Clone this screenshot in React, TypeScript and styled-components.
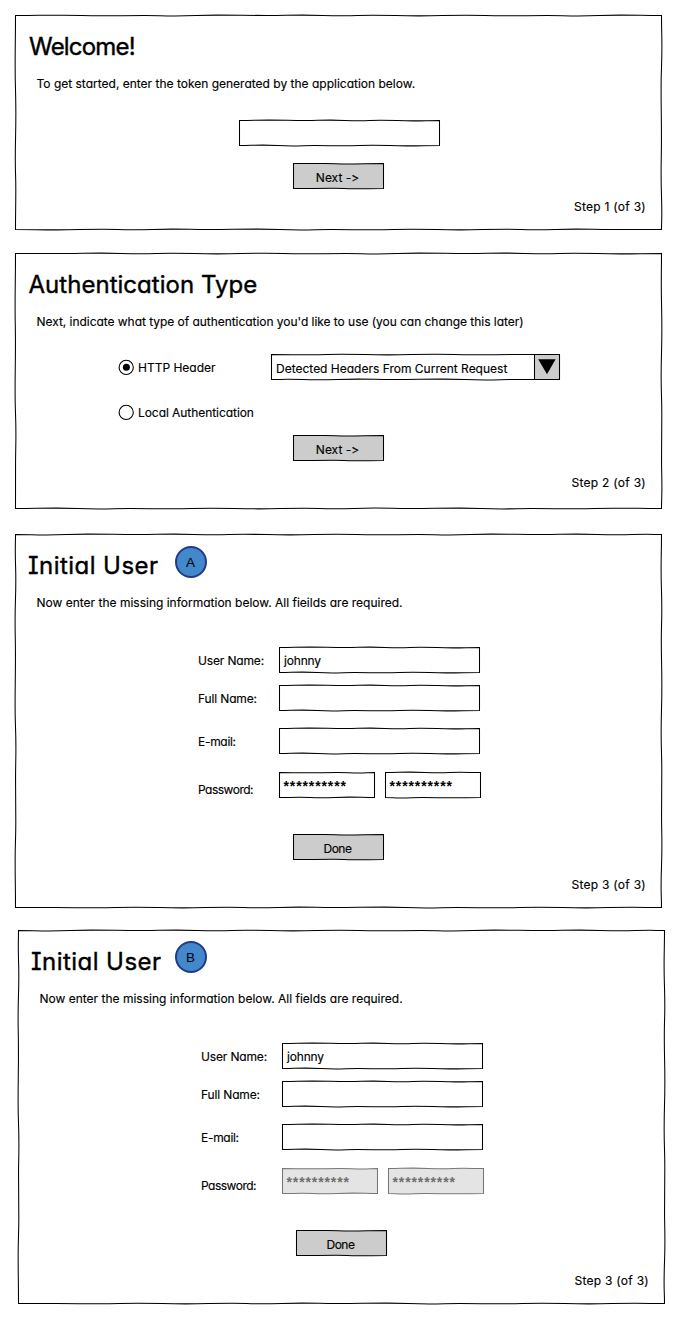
import React from 'react';
import styled, { createGlobalStyle, css } from 'styled-components';

const GlobalStyle = createGlobalStyle`
  body {
    margin: 0;
    background: #fff;
    color: #000;
    font-family: Inter, 'Noto Sans', sans-serif;
    font-size: 12px;
    line-height: 21px;
    font-feature-settings: 'cv11', 'cv08', 'calt' 0;
    -webkit-text-stroke: 0.15px currentColor;
  }
`;

/* ---------- hand-drawn outline ---------- */

const KNOTS = [34, 27, 31, 22, 30, 36, 25, 29, 21, 33];
const DRIFT = [-0.35, 0.3, 0.05, 0.4, -0.4, -0.05, -0.4, 0.3, -0.2, 0.35];

function edge(length: number, seed: number): [number, number][] {
  const points: [number, number][] = [];
  const stretch = length > 205 ? 1.4 : 1;
  let at = 0;
  for (let i = seed; ; i += 1) {
    at += KNOTS[i % KNOTS.length] * stretch;
    if (at > length - 14) break;
    points.push([at, DRIFT[i % DRIFT.length]]);
  }
  points.push([length, 0]);
  return points;
}

function outline(w: number, h: number, seed: number) {
  const x0 = 0.5;
  const y0 = 0.5;
  const x1 = w - 0.5;
  const y1 = h - 0.5;
  let d = `M${x0} ${y0}`;
  const run = (length: number, s: number, place: (t: number, o: number) => [number, number]) => {
    let previous: [number, number] = [0, 0];
    edge(length, s).forEach(point => {
      const middle = (previous[0] + point[0]) / 2;
      const a = place(middle, previous[1]);
      const b = place(middle, point[1]);
      const c = place(point[0], point[1]);
      d += `C${a.join(' ')} ${b.join(' ')} ${c.join(' ')}`;
      previous = point;
    });
  };
  run(x1 - x0, seed, (t, o) => [x0 + t, y0 + o]);
  run(y1 - y0, seed + 3, (t, o) => [x1 + o, y0 + t]);
  run(x1 - x0, seed + 5, (t, o) => [x1 - t, y1 + o]);
  run(y1 - y0, seed + 7, (t, o) => [x0 + o, y1 - t]);
  return `${d}Z`;
}

const OutlineSvg = styled.svg`
  position: absolute;
  inset: 0;
  z-index: -1;
  overflow: visible;
`;

interface SketchProps {
  w: number;
  h: number;
  seed?: number;
  fill?: string;
  stroke?: string;
}

function Sketch({ w, h, seed = 0, fill = '#fff', stroke = '#000' }: SketchProps) {
  return (
    <OutlineSvg width={w} height={h} aria-hidden="true">
      <path d={outline(w, h, seed)} fill={fill} stroke={stroke} strokeWidth={1.05} />
    </OutlineSvg>
  );
}

const sketched = css`
  position: relative;
  z-index: 0;
  box-sizing: border-box;
  flex: none;
`;

/* ---------- layout ---------- */

const Page = styled.main`
  display: flex;
  flex-direction: column;
  padding: 15px;
  height: 1318px;
  box-sizing: border-box;
`;

const PanelBox = styled.section<{ $h: number; $top: number; $shift: number }>`
  ${sketched}
  display: flex;
  flex-direction: column;
  width: 647px;
  height: ${p => p.$h}px;
  margin: ${p => p.$top}px 0 0 ${p => p.$shift}px;
  padding-top: 14px;
`;

const Heading = styled.h1<{ $left: number; $track: number }>`
  margin: 0 0 9px;
  padding-left: ${p => p.$left}px;
  font-size: 24px;
  font-weight: 400;
  line-height: 35px;
  letter-spacing: ${p => p.$track}px;
  white-space: nowrap;
  -webkit-text-stroke: 0.4px currentColor;
`;

const Text = styled.span<{ $track?: number }>`
  letter-spacing: ${p => p.$track ?? 0}px;
  white-space: nowrap;
`;

const Lead = styled.p<{ $track?: number }>`
  margin: 0;
  padding-left: 21.5px;
  letter-spacing: ${p => p.$track ?? 0}px;
  white-space: nowrap;
`;

const Step = styled.p<{ $top: number }>`
  margin: ${p => p.$top}px 16px 0 0;
  text-align: right;
  letter-spacing: 0.27px;
`;

const ButtonBox = styled.button<{ $top: number }>`
  ${sketched}
  align-self: center;
  width: 91px;
  height: 26px;
  margin-top: ${p => p.$top}px;
  padding: 2px 2px 0 0;
  border: 0;
  background: none;
  color: inherit;
  font: inherit;
  font-feature-settings: inherit;
  line-height: 25px;
`;

const FieldBox = styled.div<{ $w: number; $disabled?: boolean }>`
  ${sketched}
  width: ${p => p.$w}px;
  height: 26px;
  padding-left: 5px;
  line-height: 27px;
  color: ${p => (p.$disabled ? '#6e6e6e' : '#000')};
`;

const Stars = styled.span`
  display: block;
  margin-left: -0.5px;
  font-family: 'Liberation Sans', Arial, sans-serif;
  font-size: 14px;
  font-weight: 700;
  line-height: 28px;
  letter-spacing: 0.88px;
  -webkit-text-stroke: 0;
`;

const TokenRow = styled.div`
  display: flex;
  margin: 26px 0 0 224px;
`;

const Form = styled.div`
  display: flex;
  flex-direction: column;
  padding: 34px 0 0 183px;
`;

const FormRow = styled.div<{ $top?: number; $drop?: number }>`
  display: grid;
  grid-template-columns: 81px auto;
  height: 26px;
  margin-top: ${p => p.$top ?? 0}px;
  line-height: 27px;

  & > span {
    padding-top: ${p => p.$drop ?? 0}px;
  }
`;

const Pair = styled.div`
  display: flex;
  gap: 10px;
`;

const Badge = styled.div<{ $x: number; $y: number }>`
  position: absolute;
  left: ${p => p.$x}px;
  top: ${p => p.$y}px;
  box-sizing: border-box;
  width: 32px;
  height: 32px;
  border: 2px solid #1f3a8a;
  border-radius: 50%;
  background: #4488cc;
  font-family: 'Liberation Sans', Arial, sans-serif;
  font-size: 13.5px;
  line-height: 29px;
  text-align: center;
  -webkit-text-stroke: 0;
`;

const Options = styled.div`
  display: flex;
  flex-direction: column;
  gap: 19px;
  padding: 22px 0 0 103px;
`;

const Option = styled.div`
  display: grid;
  grid-template-columns: 20px 133px auto;
  height: 26px;
  line-height: 27px;
`;

const RadioSvg = styled.svg`
  margin-top: 5px;
`;

const SelectBox = styled.div`
  ${sketched}
  display: flex;
  justify-content: space-between;
  width: 289px;
  height: 26px;
  padding-left: 5px;
  line-height: 29px;
`;

const ArrowBox = styled.div`
  ${sketched}
  width: 26px;
  height: 26px;
`;

const ArrowSvg = styled.svg`
  display: block;
`;

/* ---------- parts ---------- */

function Panel({ h, top = 0, shift = 0, seed, children }: {
  h: number; top?: number; shift?: number; seed: number; children: React.ReactNode;
}) {
  return (
    <PanelBox $h={h} $top={top} $shift={shift}>
      <Sketch w={647} h={h} seed={seed} />
      {children}
    </PanelBox>
  );
}

function Button({ top, track, children }: { top: number; track?: number; children: React.ReactNode }) {
  return (
    <ButtonBox $top={top} type="button">
      <Sketch w={91} h={26} seed={2} fill="#ccc" />
      <Text $track={track}>{children}</Text>
    </ButtonBox>
  );
}

function Field({ w = 201, value, seed = 4 }: { w?: number; value?: string; seed?: number }) {
  return (
    <FieldBox $w={w}>
      <Sketch w={w} h={26} seed={seed} />
      {value && <Text $track={-0.17}>{value}</Text>}
    </FieldBox>
  );
}

function Password({ disabled, seed }: { disabled?: boolean; seed: number }) {
  return (
    <FieldBox $w={96} $disabled={disabled}>
      <Sketch
        w={96}
        h={26}
        seed={seed}
        fill={disabled ? '#e4e4e4' : '#fff'}
        stroke={disabled ? '#777' : '#000'}
      />
      <Stars>**********</Stars>
    </FieldBox>
  );
}

function Radio({ checked }: { checked?: boolean }) {
  return (
    <RadioSvg width="17" height="17" viewBox="0 0 17 17">
      <circle cx="8.2" cy="8.4" r="7.1" fill="#fff" stroke="#000" strokeWidth="1.1" />
      {checked && <circle cx="8.4" cy="8.2" r="3.5" fill="#000" />}
    </RadioSvg>
  );
}

interface UserPanelProps {
  top: number;
  shift?: number;
  letter: string;
  badgeX: number;
  badgeY: number;
  lead: string;
  locked?: boolean;
}

function UserPanel({ top, shift, letter, badgeX, badgeY, lead, locked }: UserPanelProps) {
  return (
    <Panel h={374} top={top} shift={shift} seed={3}>
      <Heading $left={13} $track={0.45}>Initial User</Heading>
      <Badge $x={badgeX} $y={badgeY}>{letter}</Badge>
      <Lead>{lead}</Lead>
      <Form>
        <FormRow>
          <Text $track={-0.15}>User Name:</Text>
          <Field value="johnny" />
        </FormRow>
        <FormRow $top={12}>
          <Text $track={-0.14}>Full Name:</Text>
          <Field />
        </FormRow>
        <FormRow $top={17}>
          <Text $track={-0.3}>E-mail:</Text>
          <Field />
        </FormRow>
        <FormRow $top={18} $drop={4}>
          <Text $track={-0.5}>Password:</Text>
          <Pair>
            <Password disabled={locked} seed={1} />
            <Password disabled={locked} seed={6} />
          </Pair>
        </FormRow>
      </Form>
      <Button top={36} track={-0.5}>Done</Button>
      <Step $top={14}>Step 3 (of 3)</Step>
    </Panel>
  );
}

export default function App() {
  return (
    <>
      <GlobalStyle />
      <Page>
        <Panel h={215} seed={0}>
          <Heading $left={14} $track={-0.8}>Welcome!</Heading>
          <Lead>To get started, enter the token generated by the application below.</Lead>
          <TokenRow>
            <Field />
          </TokenRow>
          <Button top={17}>{'Next ->'}</Button>
          <Step $top={7}>Step 1 (of 3)</Step>
        </Panel>

        <Panel h={256} top={23} seed={5}>
          <Heading $left={13.5} $track={0.03}>Authentication Type</Heading>
          <Lead $track={-0.043}>
            Next, indicate what type of authentication you'd like to use (you can change this later)
          </Lead>
          <Options>
            <Option>
              <Radio checked />
              <Text>HTTP Header</Text>
              <SelectBox>
                <Sketch w={289} h={26} seed={7} />
                <Text>Detected Headers From Current Request</Text>
                <ArrowBox>
                  <Sketch w={26} h={26} seed={2} fill="#ccc" />
                  <ArrowSvg width="26" height="26" viewBox="0 0 26 26">
                    <path d="M4.2 5.3H21.6L13 20.2Z" fill="#000" />
                  </ArrowSvg>
                </ArrowBox>
              </SelectBox>
            </Option>
            <Option>
              <Radio />
              <Text $track={-0.06}>Local Authentication</Text>
            </Option>
          </Options>
          <Button top={10}>{'Next ->'}</Button>
          <Step $top={11}>Step 2 (of 3)</Step>
        </Panel>

        <UserPanel
          top={25}
          letter="A"
          badgeX={159.6}
          badgeY={12.4}
          lead="Now enter the missing information below. All fieilds are required."
        />
        <UserPanel
          top={22}
          shift={3}
          letter="B"
          badgeX={156.6}
          badgeY={11.4}
          lead="Now enter the missing information below. All fields are required."
          locked
        />
      </Page>
    </>
  );
}
